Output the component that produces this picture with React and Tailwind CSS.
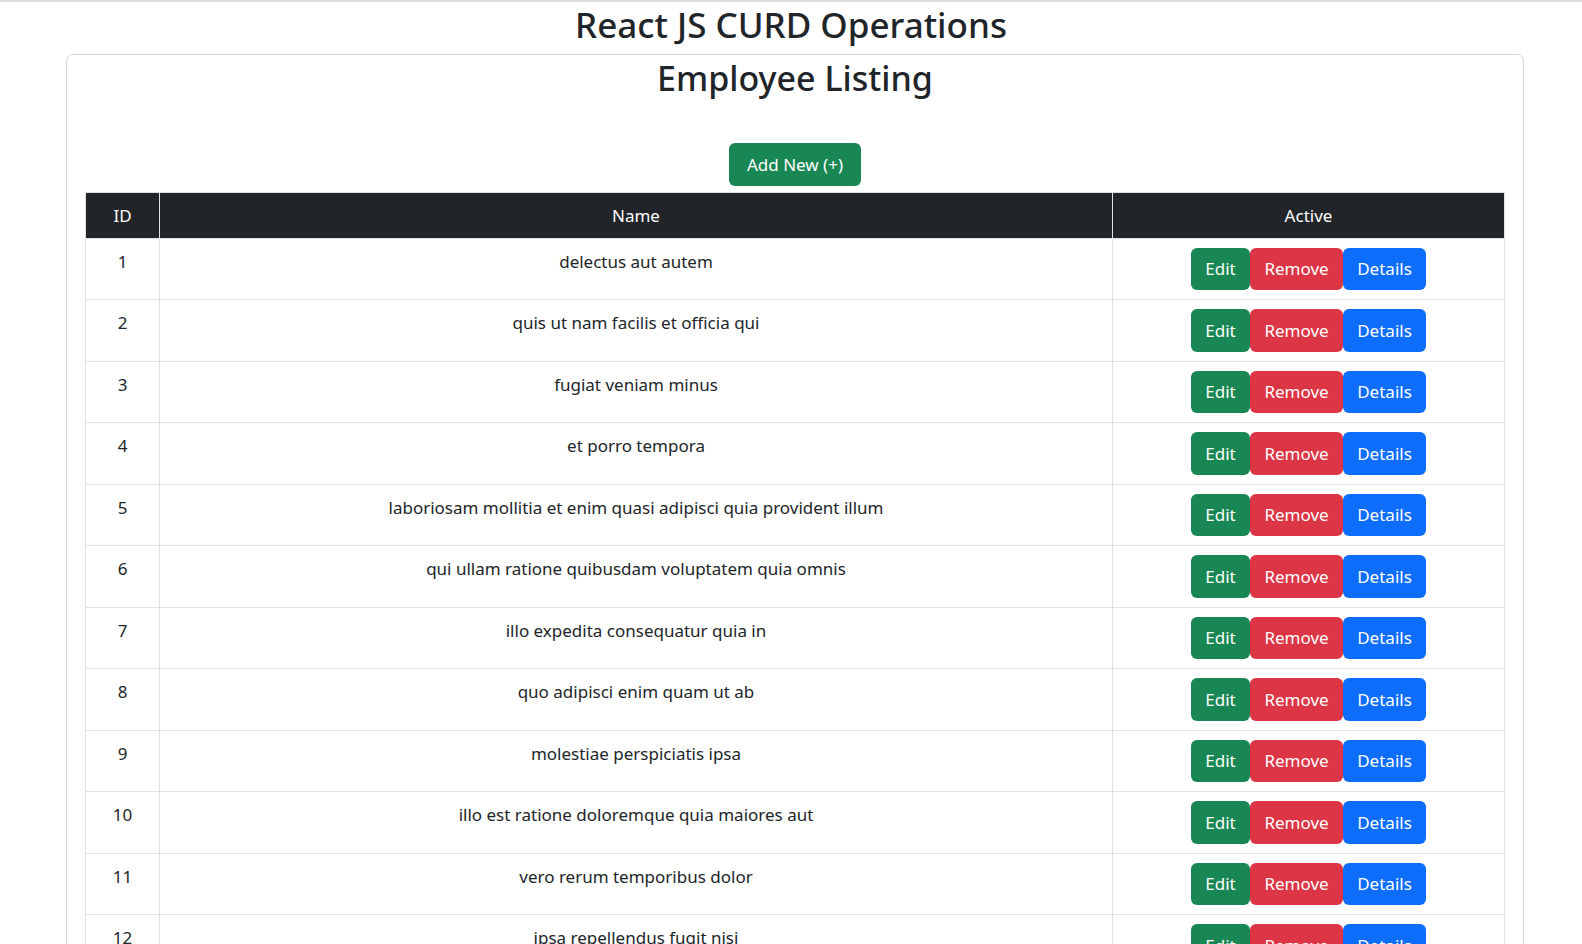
const employees = [
  { id: 1, title: 'delectus aut autem' },
  { id: 2, title: 'quis ut nam facilis et officia qui' },
  { id: 3, title: 'fugiat veniam minus' },
  { id: 4, title: 'et porro tempora' },
  { id: 5, title: 'laboriosam mollitia et enim quasi adipisci quia provident illum' },
  { id: 6, title: 'qui ullam ratione quibusdam voluptatem quia omnis' },
  { id: 7, title: 'illo expedita consequatur quia in' },
  { id: 8, title: 'quo adipisci enim quam ut ab' },
  { id: 9, title: 'molestiae perspiciatis ipsa' },
  { id: 10, title: 'illo est ratione doloremque quia maiores aut' },
  { id: 11, title: 'vero rerum temporibus dolor' },
  { id: 12, title: 'ipsa repellendus fugit nisi' },
  { id: 13, title: 'et doloremque nulla' },
];

const btn = 'h-[42.5px] border border-transparent rounded-[6px] px-[13px] text-[17px] leading-[27px] text-white';

const App = () => {
  return (
    <div className="min-h-screen bg-white border-t-2 border-[#dcdcdc] text-[#212529] font-['Noto_Sans',sans-serif]">
      <h1 className="text-center text-[35px] leading-[46px] pb-[6px] font-medium">React JS CURD Operations</h1>

      <div className="ml-[66px] w-[1458px] border border-[#d6d6d6] rounded-[7px]">
        <h2 className="text-center text-[34px] leading-[46px] font-medium">Employee Listing</h2>

        <div className="px-[18px]">
          <div className="flex justify-center mt-[42px]">
            <button className={`${btn} bg-[#198754] w-[132px]`}>Add New (+)</button>
          </div>

          <table className="mt-[6px] w-full table-fixed border-collapse text-[17px] leading-[27px]">
            <thead>
              <tr className="bg-[#212529] text-white">
                <th className="w-[74px] border border-[#dee2e6] py-[9px] font-normal">ID</th>
                <th className="w-[953px] border border-[#dee2e6] py-[9px] font-normal">Name</th>
                <th className="border border-[#dee2e6] py-[9px] font-normal">Active</th>
              </tr>
            </thead>
            <tbody>
              {employees.map((item) => (
                <tr key={item.id}>
                  <td className="border border-[#dee2e6] px-[9px] py-[9px] text-center align-top">{item.id}</td>
                  <td className="border border-[#dee2e6] px-[9px] py-[9px] text-center align-top">{item.title}</td>
                  <td className="border border-[#dee2e6] px-[9px] py-[9px] align-top">
                    <div className="flex justify-center">
                      <button className={`${btn} bg-[#198754] w-[59px]`}>Edit</button>
                      <button className={`${btn} bg-[#dc3545] w-[93px]`}>Remove</button>
                      <button className={`${btn} bg-[#0d6efd] w-[83px]`}>Details</button>
                    </div>
                  </td>
                </tr>
              ))}
            </tbody>
          </table>
        </div>
      </div>
    </div>
  );
};

export default App;
